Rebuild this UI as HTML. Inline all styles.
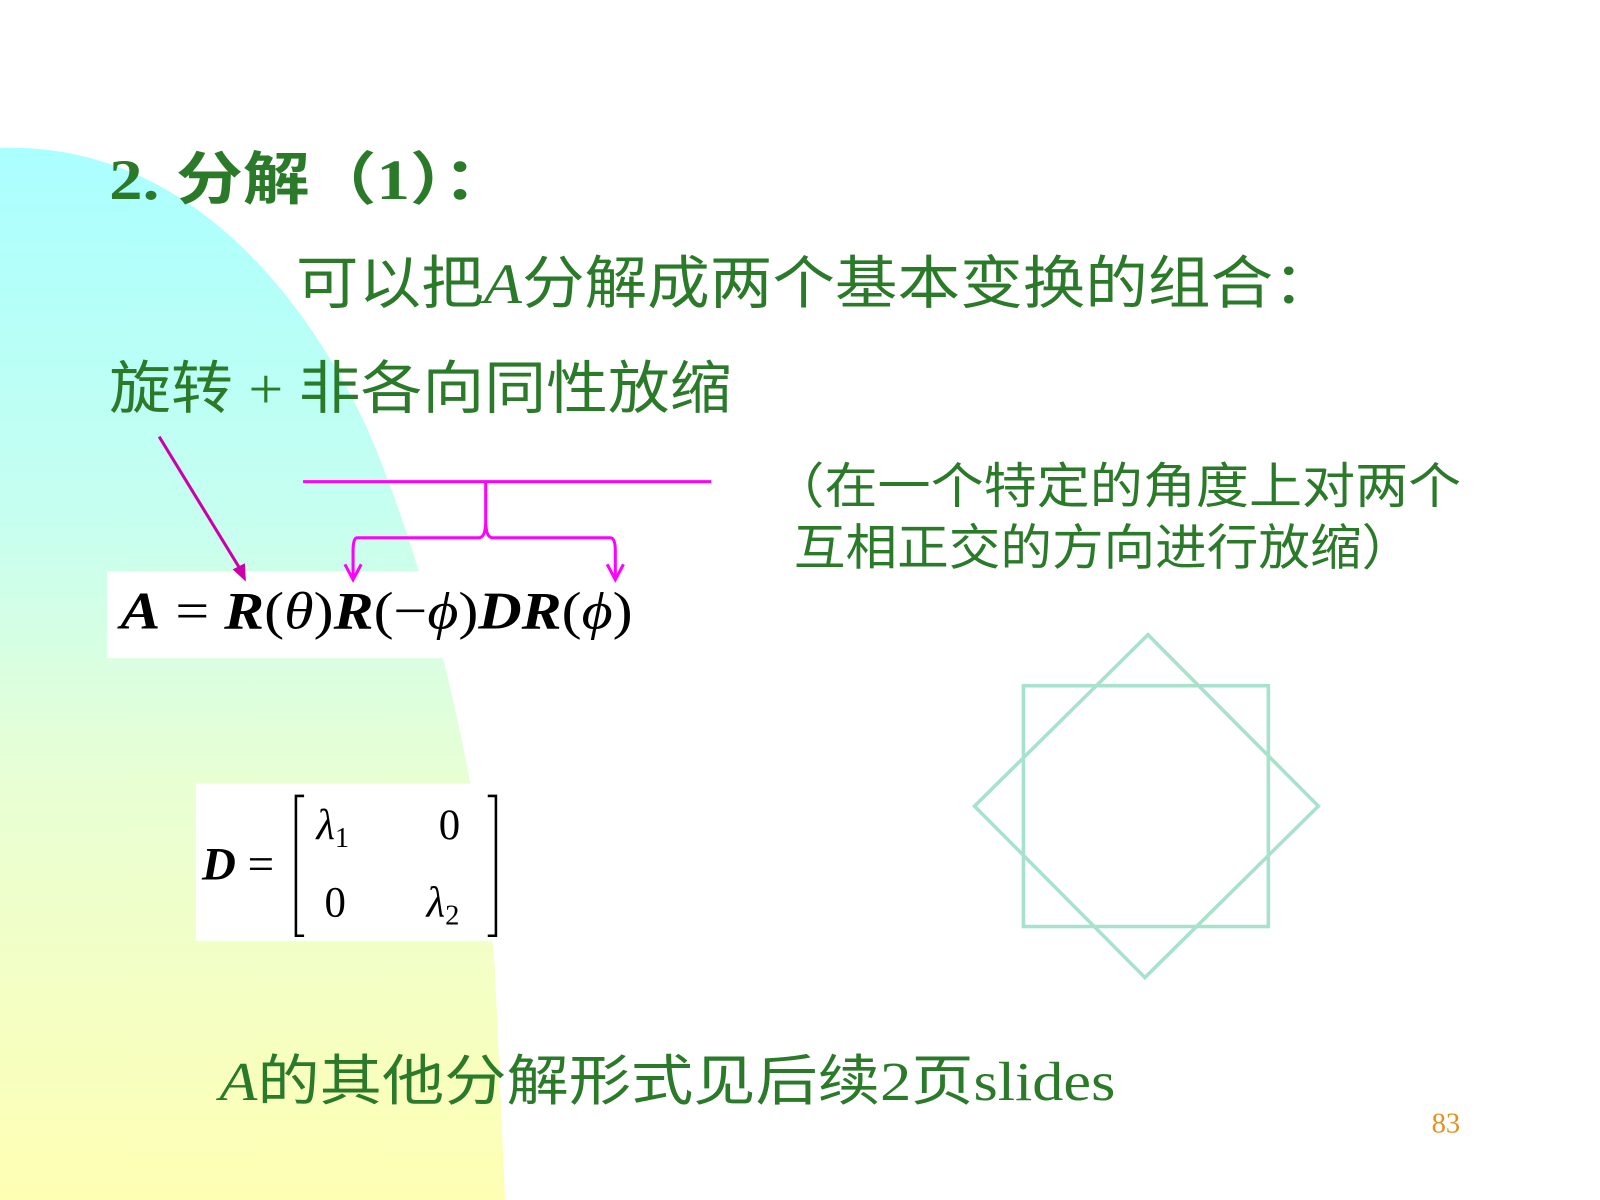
<!DOCTYPE html>
<html><head><meta charset="utf-8"><style>
html,body{margin:0;padding:0;background:#fff;}
svg{display:block;}
.g{fill:#2a7a2a;font-family:"Liberation Serif","Noto Sans CJK SC",serif;}
.m{font-family:"Liberation Serif",serif;fill:#000;}
</style></head><body>
<svg width="1600" height="1200" viewBox="0 0 1568 1176" preserveAspectRatio="none" xmlns="http://www.w3.org/2000/svg">
<defs>
<linearGradient id="bg" x1="0" y1="0" x2="0" y2="1">
<stop offset="0" stop-color="#aaffff"/>
<stop offset="0.35" stop-color="#c6fff0"/>
<stop offset="0.6" stop-color="#e8ffd4"/>
<stop offset="1" stop-color="#ffffb4"/>
</linearGradient>
</defs>
<rect width="1568" height="1176" fill="#fff"/>
<path d="M0,145 C140,140 270,230 360,420 C420,560 470,760 485,950 L495,1176 L0,1176 Z" fill="url(#bg)"/>
<text class="g" x="107" y="195" font-size="56" font-weight="bold" textLength="393" lengthAdjust="spacingAndGlyphs">2. 分解（1）：</text>
<text class="g" x="290" y="297" font-size="56" textLength="1019" lengthAdjust="spacingAndGlyphs">可以把<tspan font-style="italic" font-family="Liberation Serif,serif">A</tspan>分解成两个基本变换的组合：</text>
<text class="g" x="107" y="400" font-size="56" textLength="610" lengthAdjust="spacingAndGlyphs">旋转 + 非各向同性放缩</text>
<text class="g" x="756" y="493" font-size="48" textLength="676" lengthAdjust="spacingAndGlyphs">（在一个特定的角度上对两个</text>
<text class="g" x="778" y="553" font-size="48" textLength="607" lengthAdjust="spacingAndGlyphs">互相正交的方向进行放缩）</text>
<rect x="105" y="560" width="520" height="85" fill="#fff"/>
<text class="m" x="118" y="616" font-size="52" textLength="502" lengthAdjust="spacingAndGlyphs"><tspan font-style="italic" font-weight="bold">A</tspan> = <tspan font-style="italic" font-weight="bold">R</tspan>(<tspan font-style="italic">θ</tspan>)<tspan font-style="italic" font-weight="bold">R</tspan>(−<tspan font-style="italic">ϕ</tspan>)<tspan font-style="italic" font-weight="bold">DR</tspan>(<tspan font-style="italic">ϕ</tspan>)</text>
<rect x="192" y="768" width="298" height="154" fill="#fff"/>
<text class="m" x="198" y="862" font-size="46"><tspan font-style="italic" font-weight="bold">D</tspan> =</text>
<path d="M298,780 H290 V917 H298 M478,780 H486 V917 H478" stroke="#000" stroke-width="2.5" fill="none"/>
<text class="m" x="310" y="822" font-size="42" font-style="italic">λ<tspan font-size="28" font-style="normal" dy="8">1</tspan></text>
<text class="m" x="430" y="822" font-size="42">0</text>
<text class="m" x="318" y="898" font-size="42">0</text>
<text class="m" x="418" y="898" font-size="42" font-style="italic">λ<tspan font-size="28" font-style="normal" dy="8">2</tspan></text>
<g stroke="#ff00ff" stroke-width="3" fill="none">
<line x1="297" y1="472" x2="697" y2="472"/>
<path d="M476,472 V510 Q476,526 470,527 H350 Q346,527 346,540 V566 M476,510 Q476,526 482,527 H598 Q603,527 603,540 V566"/>
<path d="M338,553 L346,568 L354,553 M595,553 L603,568 L611,553"/>
</g>
<line x1="156" y1="428" x2="238" y2="562" stroke="#cc00aa" stroke-width="3"/>
<path d="M228,558 L241,570 L240,552 Z" fill="#cc00aa"/>
<g stroke="#a8e2cc" stroke-width="3.5" fill="none">
<rect x="1003" y="672" width="240" height="236"/>
<polygon points="1125,622 1292,790 1122,958 955,790"/>
</g>
<text class="g" x="215" y="1078" font-size="54" textLength="878" lengthAdjust="spacingAndGlyphs"><tspan font-style="italic">A</tspan>的其他分解形式见后续2页slides</text>
<text x="1403" y="1110" font-size="28" fill="#e8901a" font-family="Liberation Serif,serif">83</text>
</svg>
</body></html>
